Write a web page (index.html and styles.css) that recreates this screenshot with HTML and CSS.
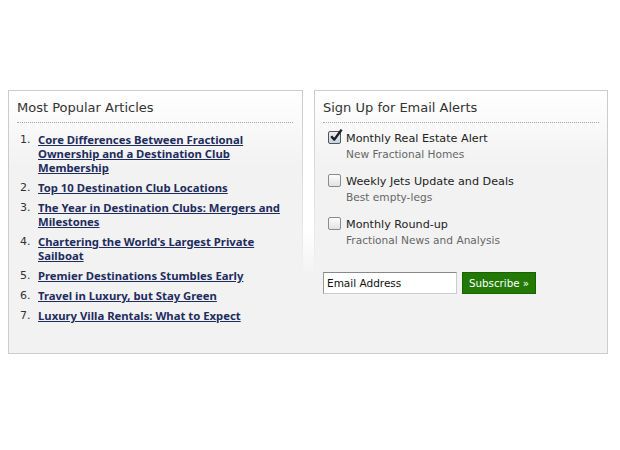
FILE: index.html
```html
<!DOCTYPE html>
<html>
<head>
<meta charset="utf-8">
<link rel="stylesheet" href="styles.css">
</head>
<body>
<div class="modules">
  <section class="panel panel-left">
    <h2 class="panel-title">Most Popular Articles</h2>
    <ol class="articles">
      <li><span class="num">1.</span><a href="#">Core Differences Between Fractional Ownership and a Destination Club Membership</a></li>
      <li><span class="num">2.</span><a href="#">Top 10 Destination Club Locations</a></li>
      <li><span class="num">3.</span><a href="#">The Year in Destination Clubs: Mergers and Milestones</a></li>
      <li><span class="num">4.</span><a href="#">Chartering the World's Largest Private Sailboat</a></li>
      <li><span class="num">5.</span><a href="#">Premier Destinations Stumbles Early</a></li>
      <li><span class="num">6.</span><a href="#">Travel in Luxury, but Stay Green</a></li>
      <li><span class="num">7.</span><a href="#">Luxury Villa Rentals: What to Expect</a></li>
    </ol>
  </section>
  <section class="panel panel-right">
    <h2 class="panel-title">Sign Up for Email Alerts</h2>
    <ul class="alerts">
      <li>
        <span class="cb checked"><svg width="16" height="16" viewBox="0 0 16 16"><path d="M3.2 8.2 L6.3 11.6 L13.6 1.6" fill="none" stroke="#1d1d1d" stroke-width="2.4" stroke-linejoin="round"/></svg></span>
        <div class="alert-text"><div class="alert-title">Monthly Real Estate Alert</div><div class="alert-sub">New Fractional Homes</div></div>
      </li>
      <li>
        <span class="cb"></span>
        <div class="alert-text"><div class="alert-title">Weekly Jets Update and Deals</div><div class="alert-sub">Best empty-legs</div></div>
      </li>
      <li>
        <span class="cb"></span>
        <div class="alert-text"><div class="alert-title">Monthly Round-up</div><div class="alert-sub">Fractional News and Analysis</div></div>
      </li>
    </ul>
    <div class="signup">
      <input class="email" type="text" value="Email Address">
      <button class="subscribe" type="button">Subscribe »</button>
    </div>
  </section>
</div>
</body>
</html>
```
FILE: styles.css
```css
* { box-sizing: border-box; }
body {
  margin: 0;
  background: #fff;
  font-family: "DejaVu Sans", "Liberation Sans", sans-serif;
  color: #333;
}
.modules {
  display: flex;
  gap: 11px;
  width: 600px;
  height: 264px;
  margin: 90px 8px 0;
  border-bottom: 1px solid #ccc;
  background: linear-gradient(#fff 0, #fff 140px, #f2f2f2 185px);
}
.panel {
  border-top: 1px solid #ccc;
  padding: 8px 8px 0 8px;
}
.panel-left {
  width: 295px;
  border-left: 1px solid #ccc;
  background:
    linear-gradient(#c8c8c8, rgba(204,204,204,0) 180px) right top / 1px 100% no-repeat,
    linear-gradient(#fff 0, #f2f2f2 75px);
  padding-right: 10px;
}
.panel-right {
  width: 294px;
  border-right: 1px solid #ccc;
  background:
    linear-gradient(#c8c8c8, rgba(204,204,204,0) 180px) left top / 1px 100% no-repeat,
    linear-gradient(#fff 0, #f2f2f2 75px);
  padding-left: 9px;
}
.panel-title {
  margin: 0;
  font-size: 13px;
  font-weight: normal;
  line-height: 18px;
  color: #333;
  padding-bottom: 5px;
  border-bottom: 1px dotted #a8a8a8;
}
.articles {
  list-style: none;
  margin: 10px 0 0;
  padding: 0;
}
.articles li {
  display: flex;
  margin-bottom: 6px;
  font-size: 11px;
  line-height: 14px;
}
.num {
  flex: none;
  width: 21px;
  padding-left: 3px;
  color: #333;
}
.articles a {
  font-family: "Noto Sans", "DejaVu Sans", sans-serif;
  font-size: 11.3px;
  color: #1e2c5e;
  font-weight: bold;
  text-decoration: underline;
}
.alerts {
  list-style: none;
  margin: 8px 0 0;
  padding: 0;
}
.alerts li {
  display: flex;
  margin-bottom: 13px;
}
.cb {
  flex: none;
  position: relative;
  width: 13px;
  height: 13px;
  margin: 0 5px 0 5px;
  border: 1px solid #8a8a8a;
  border-radius: 2px;
  background: linear-gradient(#fdfdfd, #e2e2e2);
}
.cb.checked {
  border-color: #555;
  background: linear-gradient(#e9eef6, #c7d2e3);
}
.cb svg {
  position: absolute;
  left: -1px;
  top: -4px;
}
.alert-title {
  font-size: 11.2px;
  line-height: 15px;
  color: #222;
}
.alert-sub {
  font-size: 10.6px;
  line-height: 14px;
  color: #666;
  margin-top: 1px;
}
.signup {
  display: flex;
  gap: 5px;
  margin-top: 25px;
}
.email {
  width: 134px;
  height: 22px;
  margin: 0;
  padding: 0 3px;
  border: 1px solid #999;
  border-color: #888 #ccc #ccc #999;
  background: #fff;
  font-family: "DejaVu Sans", sans-serif;
  font-size: 10.5px;
  color: #111;
}
.subscribe {
  height: 22px;
  margin: 0;
  padding: 0 6px;
  border: 1px solid #1b6100;
  background: #227a04;
  color: #fff;
  font-family: "DejaVu Sans", sans-serif;
  font-size: 10.3px;
}
```
